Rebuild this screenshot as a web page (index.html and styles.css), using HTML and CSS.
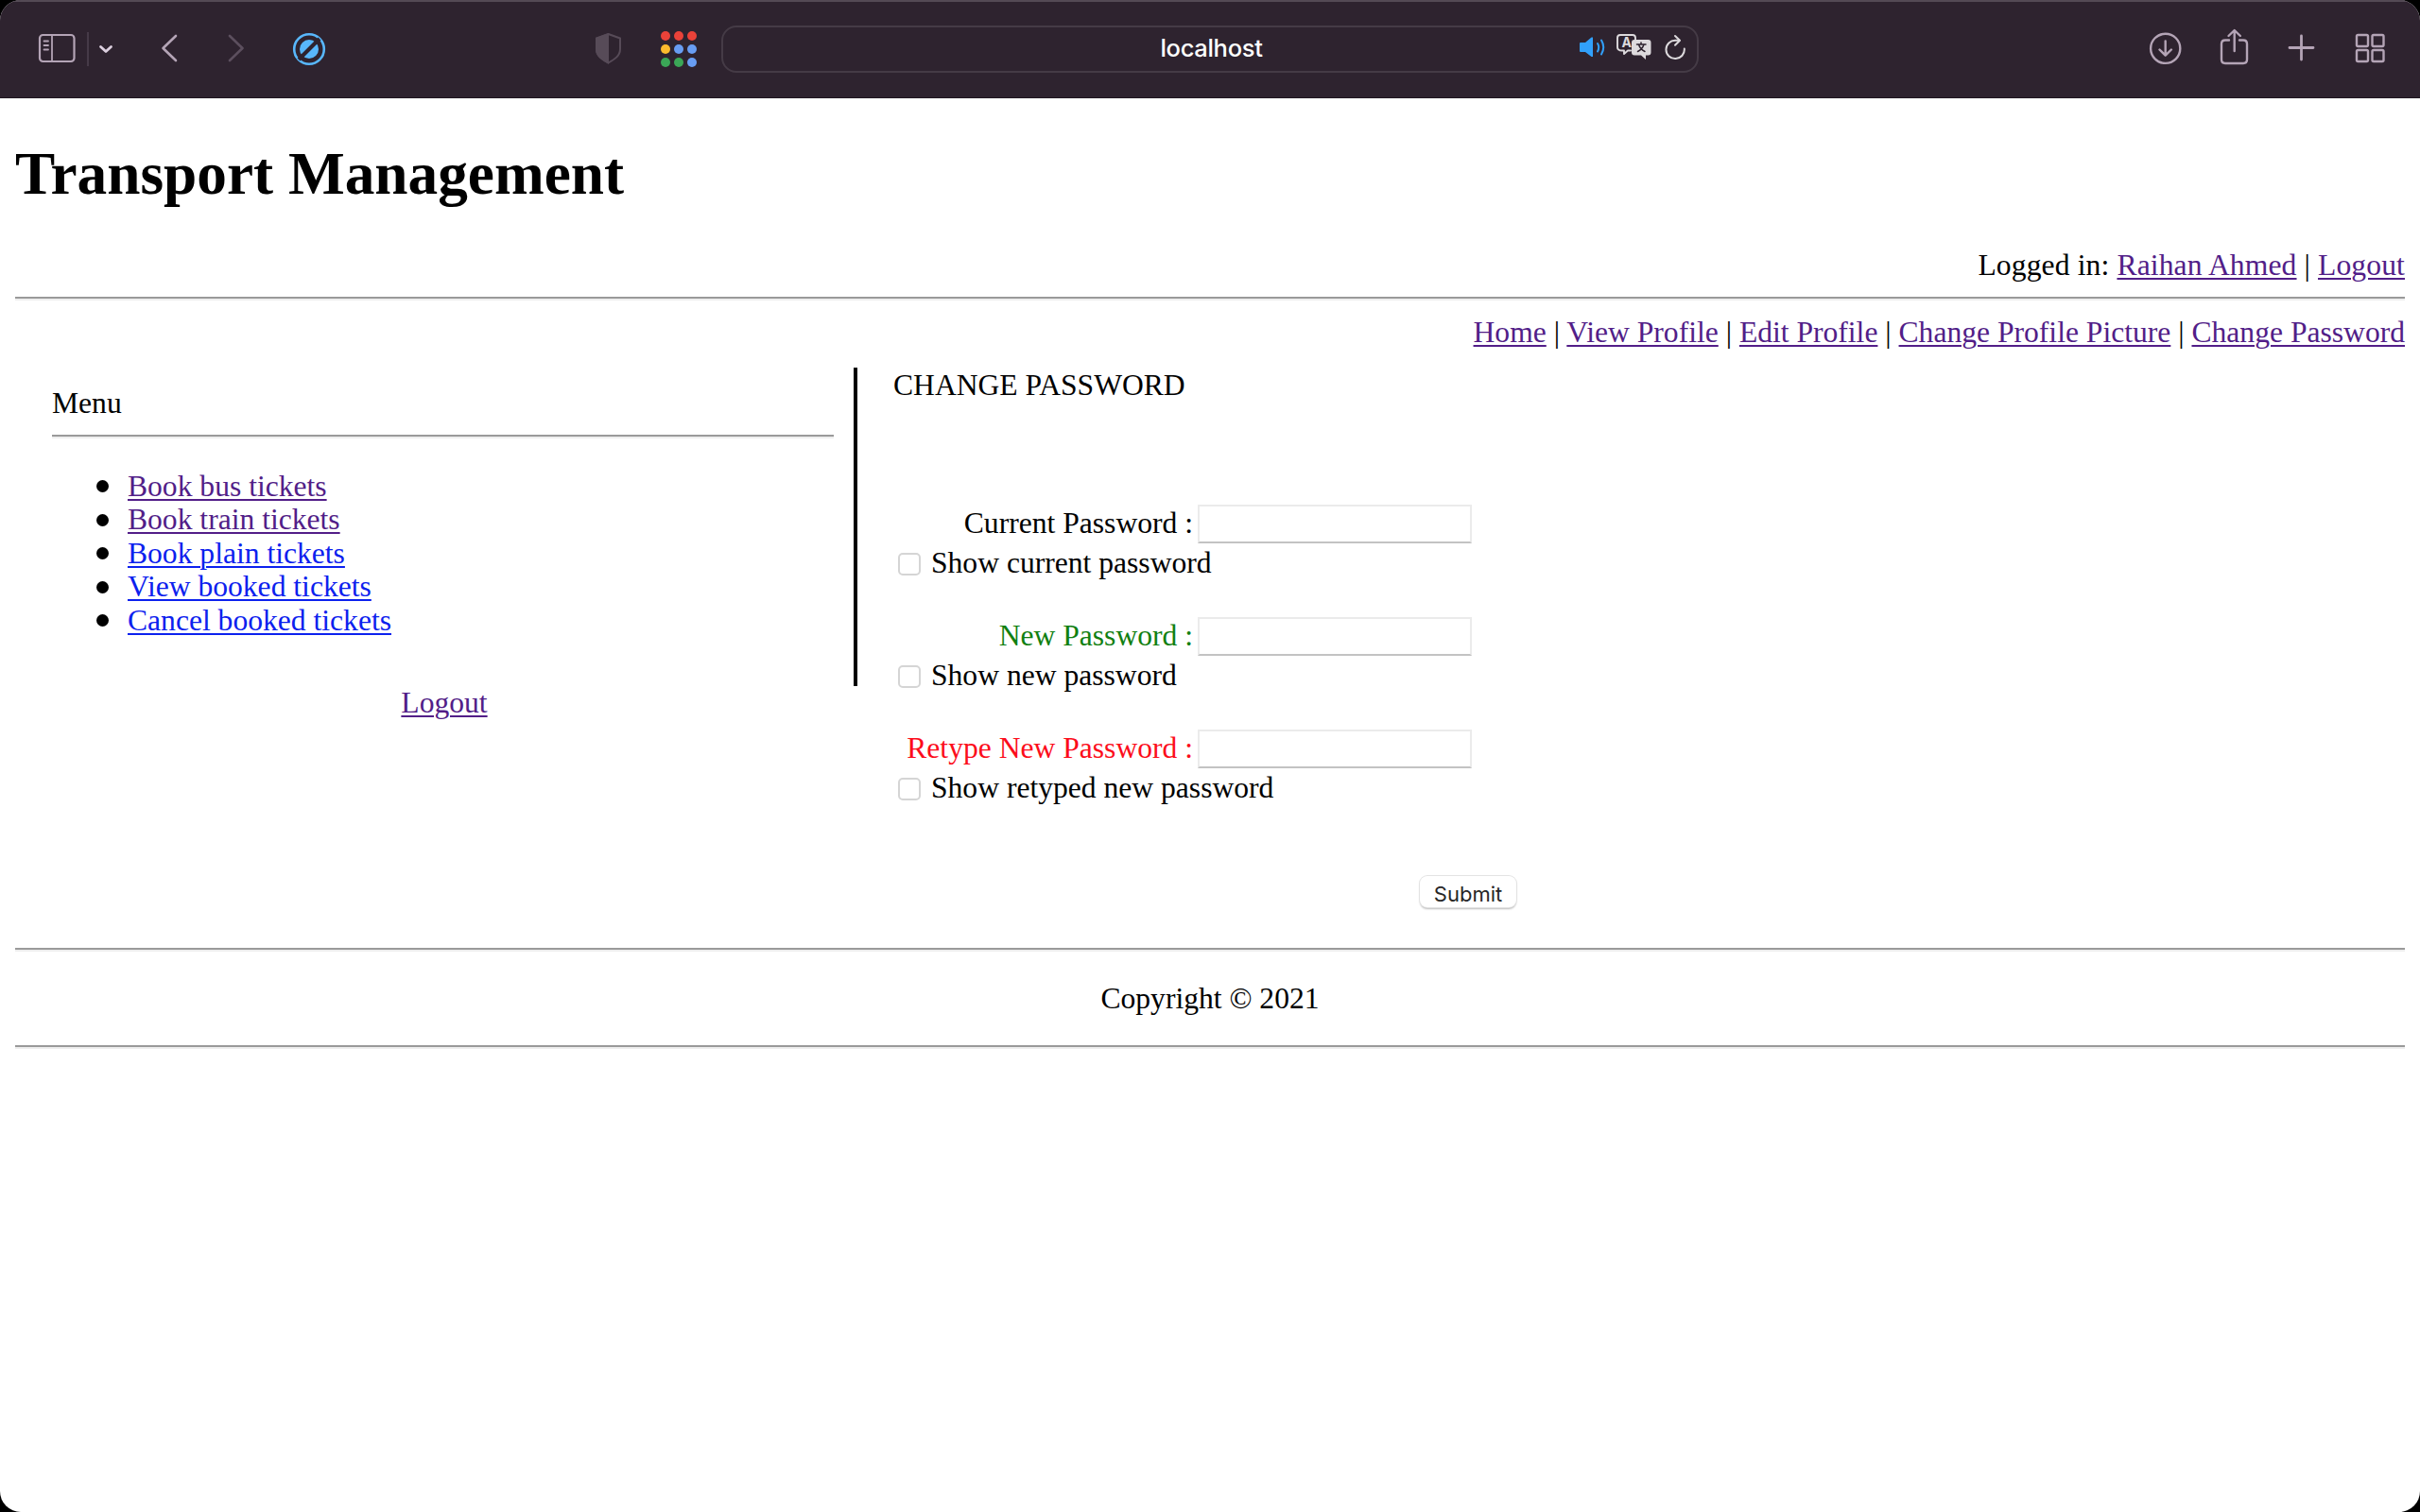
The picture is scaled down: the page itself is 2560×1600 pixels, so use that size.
FILE: index.html
```html
<!DOCTYPE html>
<html lang="en">
<head>
<meta charset="utf-8">
<title>Transport Management</title>
<link rel="stylesheet" href="styles.css">
</head>
<body>
<div class="window">
  <header class="toolbar">
    <svg class="tools-left" width="620" height="104" viewBox="0 0 620 104" fill="none" stroke="#b4a4b6" stroke-width="2.2" stroke-linecap="round" stroke-linejoin="round">
      <rect x="42" y="37" width="36.500" height="28" rx="3.500"/>
      <path d="M55 37v28M46.500 43.500h4.500M46.500 48h4.500M46.500 52.500h4.500" stroke-width="1.800"/>
      <path d="M93 34v36" stroke="#463a48" stroke-width="2" stroke-linecap="butt"/>
      <path d="M106.500 49.500l5.500 5 5.500-5" stroke="#dccfdf" stroke-width="2.800"/>
      <path d="M186 38l-13.500 13L186 64" stroke-width="2.600"/>
      <path d="M243 38l13.500 13L243 64" stroke="#5c4f5e" stroke-width="2.600"/>
      <circle cx="327" cy="52" r="15.800" stroke="#58b7fc" stroke-width="2.600"/>
      <circle cx="327" cy="52" r="10" fill="#58b7fc" stroke="none"/>
      <path d="M316 63l22-22" stroke="#2e232f" stroke-width="4" stroke-linecap="butt"/>
    </svg>
    <svg class="tools-middle" width="144" height="104" viewBox="620 0 144 104">
      <path d="M643.500 36l12.500 4.500v11.500c0 7-5.500 10.500-12.500 14.500-7-4-12.500-7.500-12.500-14.500V40.500z" fill="none" stroke="#574b58" stroke-width="2" stroke-linejoin="round"/>
      <path d="M644 35v33c-8-4.500-14-8.500-14-16V40z" fill="#574b58"/>
      <g fill="#ea4239"><circle cx="704" cy="38" r="5"/><circle cx="718" cy="38" r="5"/><circle cx="732" cy="38" r="5"/></g>
      <g fill="#689df3"><circle cx="718" cy="52" r="5"/><circle cx="732" cy="52" r="5"/><circle cx="732" cy="66" r="5"/></g>
      <circle cx="704" cy="52" r="5" fill="#fbba2d"/>
      <g fill="#3ba757"><circle cx="704" cy="66" r="5"/><circle cx="718" cy="66" r="5"/></g>
    </svg>
    <div class="address">
      <span class="host">localhost</span>
      <svg class="address-icons" width="126" height="46" viewBox="1669 29 126 46" fill="none" stroke-linecap="round" stroke-linejoin="round">
        <path d="M1672 45h5l6.500-5.500h1.500v20.500h-1.500L1677 55h-5q-1 0-1-1v-8q0-1 1-1z" fill="#31a0fb"/>
        <path d="M1690 46q2.500 4 0 8.500M1694 42.500q4.500 7.500 0 15" stroke="#31a0fb" stroke-width="2"/>
        <path d="M1725 53.500h-3l-4 3.500v-3.500h-2q-5 0-5-3.500V40q0-3 3-3h13q3 0 3 3v2.500" stroke="#dddadd" stroke-width="1.900"/>
        <text class="glyph-a" x="1715.500" y="50">A</text>
        <path d="M1729 42h14.500q3 0 3 3v10.500q0 3-3 3h-2.500v4.500l-5-4.500h-7q-3 0-3-3V45q0-3 3-3z" fill="#dddadd"/>
        <path d="M1731.500 47h9.500M1736 45v2M1732.500 54.500q5-2.500 6.500-7.500M1740 54.500q-5-2.500-6.500-7.500" stroke="#2e232f" stroke-width="1.500"/>
        <path d="M1776.500 42.700h-4a9.700 9.700 0 1 0 9.300 8.800" stroke="#dddadd" stroke-width="2"/>
        <path d="M1772 38l5 4.700-5 5" stroke="#dddadd" stroke-width="2"/>
      </svg>
    </div>
    <svg class="tools-right" width="290" height="104" viewBox="2270 0 290 104" fill="none" stroke="#b4a4b6" stroke-width="2.400" stroke-linecap="round" stroke-linejoin="round">
      <circle cx="2290.700" cy="51.300" r="15.600"/>
      <path d="M2290.700 43.500v15M2284.500 52.500l6.200 6.200 6.200-6.200"/>
      <path d="M2358 42.500h-4q-4 0-4 4V63q0 4 4 4h19q4 0 4-4V46.500q0-4-4-4h-4M2363.700 54V32.500M2357.500 38l6.200-6 6.200 6"/>
      <path d="M2434.500 38v25M2422 50.500h25" stroke-width="2.800"/>
      <rect x="2493" y="37" width="12" height="12" rx="1.500"/><rect x="2509.500" y="37" width="12" height="12" rx="1.500"/><rect x="2493" y="53" width="12" height="12" rx="1.500"/><rect x="2509.500" y="53" width="12" height="12" rx="1.500"/>
    </svg>
  </header>

  <div class="page">
    <h1>Transport Management</h1>
    <div class="account">Logged in: <a class="visited" href="#">Raihan Ahmed</a> | <a class="visited" href="#">Logout</a></div>
    <hr>
    <nav class="links"><a class="visited" href="#">Home</a> | <a class="visited" href="#">View Profile</a> | <a class="visited" href="#">Edit Profile</a> | <a class="visited" href="#">Change Profile Picture</a> | <a class="visited" href="#">Change Password</a></nav>

    <div class="columns">
      <aside class="menu">
        <div>Menu</div>
        <hr>
        <ul>
          <li><a class="visited" href="#">Book bus tickets</a></li>
          <li><a class="visited" href="#">Book train tickets</a></li>
          <li><a href="#">Book plain tickets</a></li>
          <li><a href="#">View booked tickets</a></li>
          <li><a href="#">Cancel booked tickets</a></li>
        </ul>
        <div class="menu-logout"><a class="visited" href="#">Logout</a></div>
      </aside>
      <form class="form">
        <div class="form-title">CHANGE PASSWORD</div>
        <div class="field">
          <div class="entry"><label for="current">Current Password :</label><input id="current" type="password"></div>
          <label class="show"><input type="checkbox">Show current password</label>
        </div>
        <div class="field">
          <div class="entry new"><label for="new">New Password :</label><input id="new" type="password"></div>
          <label class="show"><input type="checkbox">Show new password</label>
        </div>
        <div class="field">
          <div class="entry retype"><label for="retype">Retype New Password :</label><input id="retype" type="password"></div>
          <label class="show"><input type="checkbox">Show retyped new password</label>
        </div>
        <button type="button">Submit</button>
      </form>
    </div>

    <hr>
    <footer>Copyright © 2021</footer>
    <hr>
  </div>
</div>
</body>
</html>
```
FILE: styles.css
```css
* { box-sizing: border-box; }
html { background: #000; }
body { margin: 0; }

.window {
  width: 2560px;
  height: 1600px;
  border-radius: 22px;
  overflow: hidden;
  background: #fff;
}

/* browser toolbar */
.toolbar {
  display: flex;
  height: 104px;
  background: #2e232f;
  box-shadow: inset 0 2px #544a55, inset 0 -1px #1f1620;
}
.toolbar svg { display: block; flex: none; }
.address {
  display: grid;
  grid-template-columns: 1fr auto 1fr;
  align-items: center;
  width: 1034px;
  height: 50px;
  margin: 27px auto 0 -1px;
  border: 2px solid #453b46;
  border-radius: 16px;
}
.host {
  grid-column: 2;
  padding: 0 0 3px 3px;
  color: #fff;
  font: 500 25.5px Inter, sans-serif;
  letter-spacing: -0.3px;
}
.address-icons { justify-self: end; }
.glyph-a { font: bold 14px Inter, sans-serif; fill: #dddadd; }

/* page */
.page {
  padding: 0 16px;
  color: #000;
  font: 31.6px/35.5px "Liberation Serif", serif;
}
h1 {
  margin: 44px 0 0;
  font-size: 63.3px;
  line-height: 72px;
}
a { color: #0c21ee; text-decoration-thickness: 2px; text-underline-offset: 3px; }
.visited { color: #521e88; }
hr {
  height: 4px;
  margin: 0;
  border: 0;
  border-top: 2px solid #9a9a9a;
  background: #eee;
}
.account { margin-top: 42.5px; letter-spacing: 0.12px; text-align: right; }
.account + hr { margin-top: 16px; }
.links { margin-top: 16px; text-align: right; }

.columns { display: flex; height: 614px; margin-top: 19.5px; }
.menu {
  width: 891px;
  height: 337px;
  padding: 20px 21px 0 39px;
  border-right: 4px solid #000;
}
.menu hr { margin-top: 15.5px; }
.menu ul { margin: 32.5px 0 0; padding-left: 47px; list-style: none; }
.menu li { display: flex; align-items: center; gap: 20px; }
.menu li::before {
  content: "";
  width: 13px;
  height: 13px;
  margin-top: 1px;
  border-radius: 50%;
  background: #000;
}
.menu-logout { margin-top: 52px; padding-left: 3px; text-align: center; }

.form { display: flex; flex-direction: column; width: 661px; padding-left: 39px; }
.form-title { margin: 1px 0 108px -1px; }
.field { height: 119px; }
.entry { display: flex; align-items: center; height: 41px; }
.entry label { width: 316px; text-align: right; }
.entry input {
  width: 290px;
  height: 41px;
  margin: 0 0 0 5px;
  border: 2px solid #ebebeb;
  border-bottom-color: #c3c3c3;
}
.new label { color: #118011; }
.retype label { color: #fc0d1b; }
.show { display: flex; align-items: center; margin-top: 3px; }
.show input {
  appearance: none;
  width: 24px;
  height: 24px;
  margin: 4px 11px 0 4px;
  border: 2px solid #d5d5d5;
  border-radius: 5px;
  background: #fff;
}
button {
  align-self: flex-end;
  width: 102px;
  height: 33px;
  margin: 36px -36px 0 0;
  padding: 5px 0 0;
  border: 0;
  border-radius: 8px;
  background: #fff;
  box-shadow: 0 0 0 1px #e3e3e3, 0 2px 2px #bbb;
  color: #272727;
  font: 22px/28px Inter, sans-serif;
}
footer { margin: 32px 0 31px; line-height: 36px; text-align: center; }
```
